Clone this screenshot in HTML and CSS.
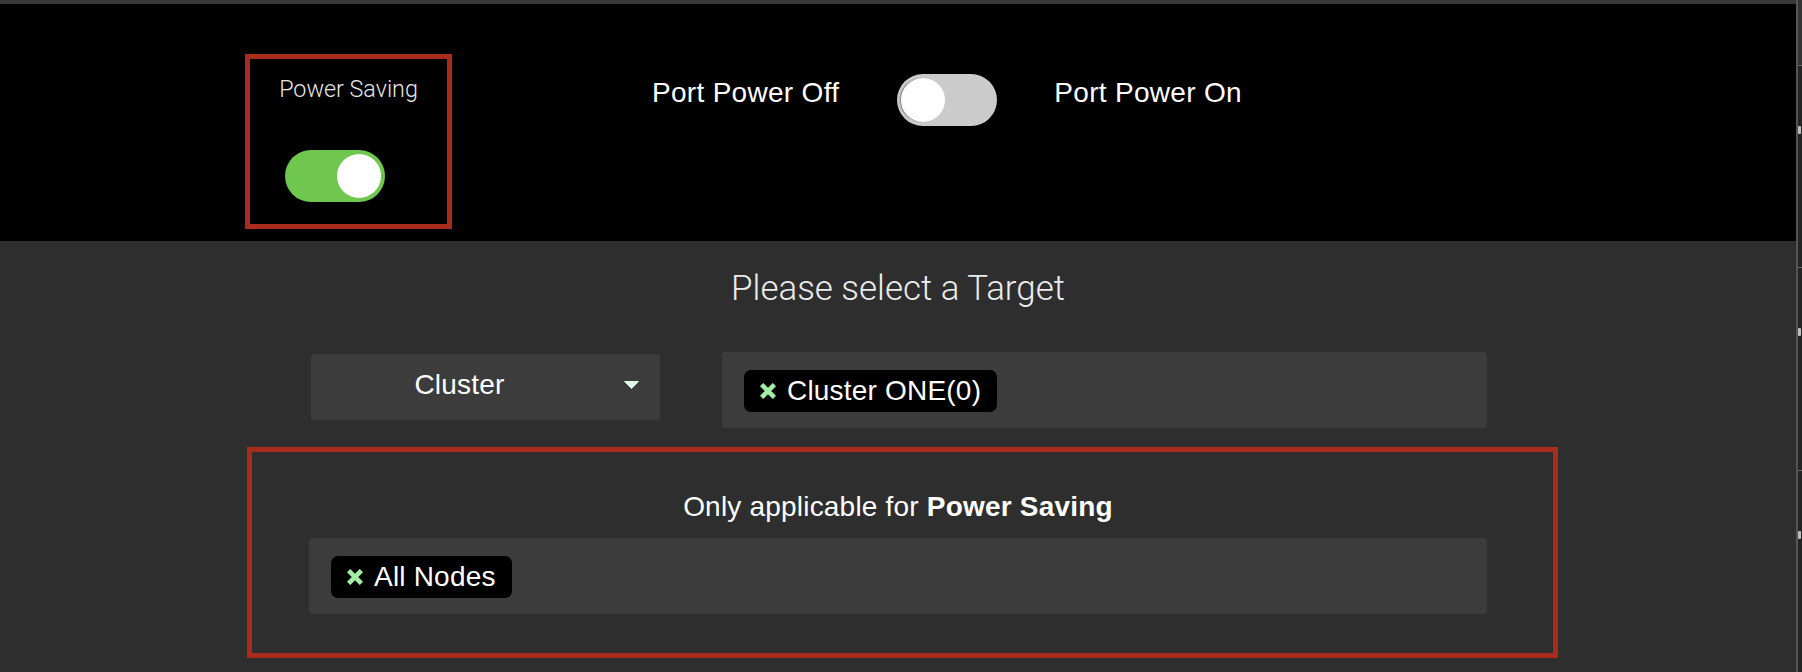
FILE: index.html
```html
<!DOCTYPE html>
<html lang="en">
<head>
<meta charset="utf-8">
<title>Power Saving</title>
<link rel="stylesheet" href="styles.css">
</head>
<body>
<div class="screen">
  <div class="main">
    <div class="topstrip"></div>
    <header class="header">
      <div class="ps-box">
        <div class="ps-label">Power Saving</div>
        <div class="toggle toggle-on"><span class="knob"></span></div>
      </div>
      <div class="port">
        <span class="port-label port-off">Port Power Off</span>
        <div class="toggle toggle-off"><span class="knob"></span></div>
        <span class="port-label port-on">Port Power On</span>
      </div>
    </header>
    <section class="target">
      <h2 class="target-title">Please select a Target</h2>
      <div class="target-row">
        <div class="select">
          <span class="select-label">Cluster</span>
          <svg class="select-arrow" width="15" height="8" viewBox="0 0 15 8"><polygon points="0.5,0.5 14.5,0.5 7.5,7.5" fill="#def8e6" stroke="#def8e6" stroke-width="1" stroke-linejoin="round"/></svg>
        </div>
        <div class="chips chips-target">
          <span class="chip">
            <svg class="chip-x" width="16" height="16" viewBox="0 0 16 16"><path d="M1.6 1.6 L14.4 14.4 M14.4 1.6 L1.6 14.4" stroke="#a4eea4" stroke-width="4.6" stroke-linecap="butt"/></svg>
            <span class="chip-text">Cluster ONE(0)</span>
          </span>
        </div>
      </div>
      <div class="note">
        <div class="note-inner">
          <p class="note-title">Only applicable for <b>Power Saving</b></p>
          <div class="chips chips-nodes">
            <span class="chip">
              <svg class="chip-x" width="16" height="16" viewBox="0 0 16 16"><path d="M1.6 1.6 L14.4 14.4 M14.4 1.6 L1.6 14.4" stroke="#a4eea4" stroke-width="4.6" stroke-linecap="butt"/></svg>
              <span class="chip-text">All Nodes</span>
            </span>
          </div>
        </div>
      </div>
    </section>
  </div>
  <div class="side-strip">
    <div class="side-top"></div>
    <div class="side-card"><span class="side-speck"></span></div>
    <div class="side-card"><span class="side-speck"></span></div>
    <div class="side-card"><span class="side-speck"></span></div>
  </div>
</div>
</body>
</html>
```
FILE: styles.css
```css
* { box-sizing: border-box; }
html, body { margin: 0; padding: 0; }
body {
  width: 1802px;
  height: 672px;
  overflow: hidden;
  background: #2e2e2e;
  font-family: "Liberation Sans", Arial, sans-serif;
  color: #fff;
}
.screen {
  display: flex;
  width: 1802px;
  height: 672px;
}
.main {
  width: 1796px;
  display: flex;
  flex-direction: column;
  background: #2e2e2e;
}
.topstrip {
  height: 4px;
  background: #383838;
}
.header {
  height: 237px;
  background: #000;
  display: flex;
  align-items: flex-start;
}
.ps-box {
  margin-left: 245px;
  margin-top: 50px;
  width: 207px;
  height: 175px;
  border: 5px solid #a92b1b;
  display: flex;
  flex-direction: column;
}
.ps-label {
  margin-top: 15px;
  font-family: Roboto, "Liberation Sans", sans-serif;
  font-weight: 300;
  font-size: 23.3px;
  line-height: 30px;
  color: #e6e6e6;
  text-align: center;
}
.toggle {
  width: 100px;
  height: 52px;
  border-radius: 26px;
  display: flex;
  align-items: center;
  padding: 0 4px;
}
.toggle .knob {
  width: 44px;
  height: 44px;
  border-radius: 50%;
  background: #fff;
}
.toggle-on {
  margin-top: 46px;
  margin-left: 35px;
  background: #6fc750;
  justify-content: flex-end;
}
.toggle-off {
  background: #cbcbcb;
  justify-content: flex-start;
}
.toggle-off .knob {
  box-shadow: -1.5px 0 1px rgba(0, 0, 0, 0.28);
}
.port {
  margin-left: 199px;
  margin-top: 70px;
  display: flex;
  align-items: flex-start;
}
.port-label {
  margin-top: 3px;
  font-size: 28px;
  line-height: 32px;
  letter-spacing: 0.3px;
  color: #fff;
  white-space: nowrap;
}
.port-off { margin-left: 1px; margin-right: 58px; }
.port-on { margin-left: 57px; }

.target {
  flex: 1;
  display: flex;
  flex-direction: column;
}
.target-title {
  margin: 26px 0 0;
  font-family: Roboto, "Liberation Sans", sans-serif;
  font-weight: 300;
  font-size: 34.9px;
  line-height: 44px;
  color: #ececec;
  text-align: center;
}
.target-row {
  margin: 41px auto 0;
  width: 1178px;
  display: flex;
  align-items: flex-start;
}
.select {
  margin-top: 2px;
  margin-left: 2px;
  width: 349px;
  height: 66px;
  background: #3c3c3c;
  border-radius: 3px;
  display: flex;
  align-items: center;
  padding: 0 21px 4px 0;
}
.select-label {
  flex: 1;
  text-align: center;
  font-size: 28px;
  line-height: 32px;
  letter-spacing: 0.2px;
}
.select-arrow {
  margin-left: 16px;
  display: block;
}
.chips {
  height: 76px;
  background: #3c3c3c;
  border-radius: 4px;
  padding: 18px 22px;
  display: flex;
  align-items: flex-start;
}
.chips-target {
  margin-left: 62px;
  width: 765px;
}
.chips-nodes {
  width: 1178px;
}
.chip {
  height: 42px;
  background: #000;
  border-radius: 7px;
  display: flex;
  align-items: center;
  padding: 0 16px;
}
.chip-x {
  display: block;
  margin-right: 11px;
}
.chip-text {
  font-size: 28px;
  line-height: 32px;
  letter-spacing: 0.2px;
  white-space: nowrap;
}
.note {
  margin-top: 19px;
  margin-left: 247px;
  width: 1311px;
  height: 211px;
  border: 5px solid #a92b1b;
  padding: 39px 0 0 57px;
}
.note-inner {
  width: 1178px;
}
.note-title {
  margin: 0 0 15px;
  font-size: 28px;
  line-height: 32px;
  letter-spacing: 0.2px;
  text-align: center;
  color: #fff;
}
.note-title b { font-weight: bold; }

.side-strip {
  width: 6px;
  background: #242424;
  border-left: 2px solid #555;
  display: flex;
  flex-direction: column;
}
.side-top {
  height: 72px;
  background: #333;
}
.side-card {
  height: 218px;
  border-top: 1px solid #6a6a6a;
  padding-top: 60px;
  display: flex;
  justify-content: flex-start;
}
.side-speck {
  width: 3px;
  height: 8px;
  background: #bdbdbd;
  border-radius: 1px;
}
```
